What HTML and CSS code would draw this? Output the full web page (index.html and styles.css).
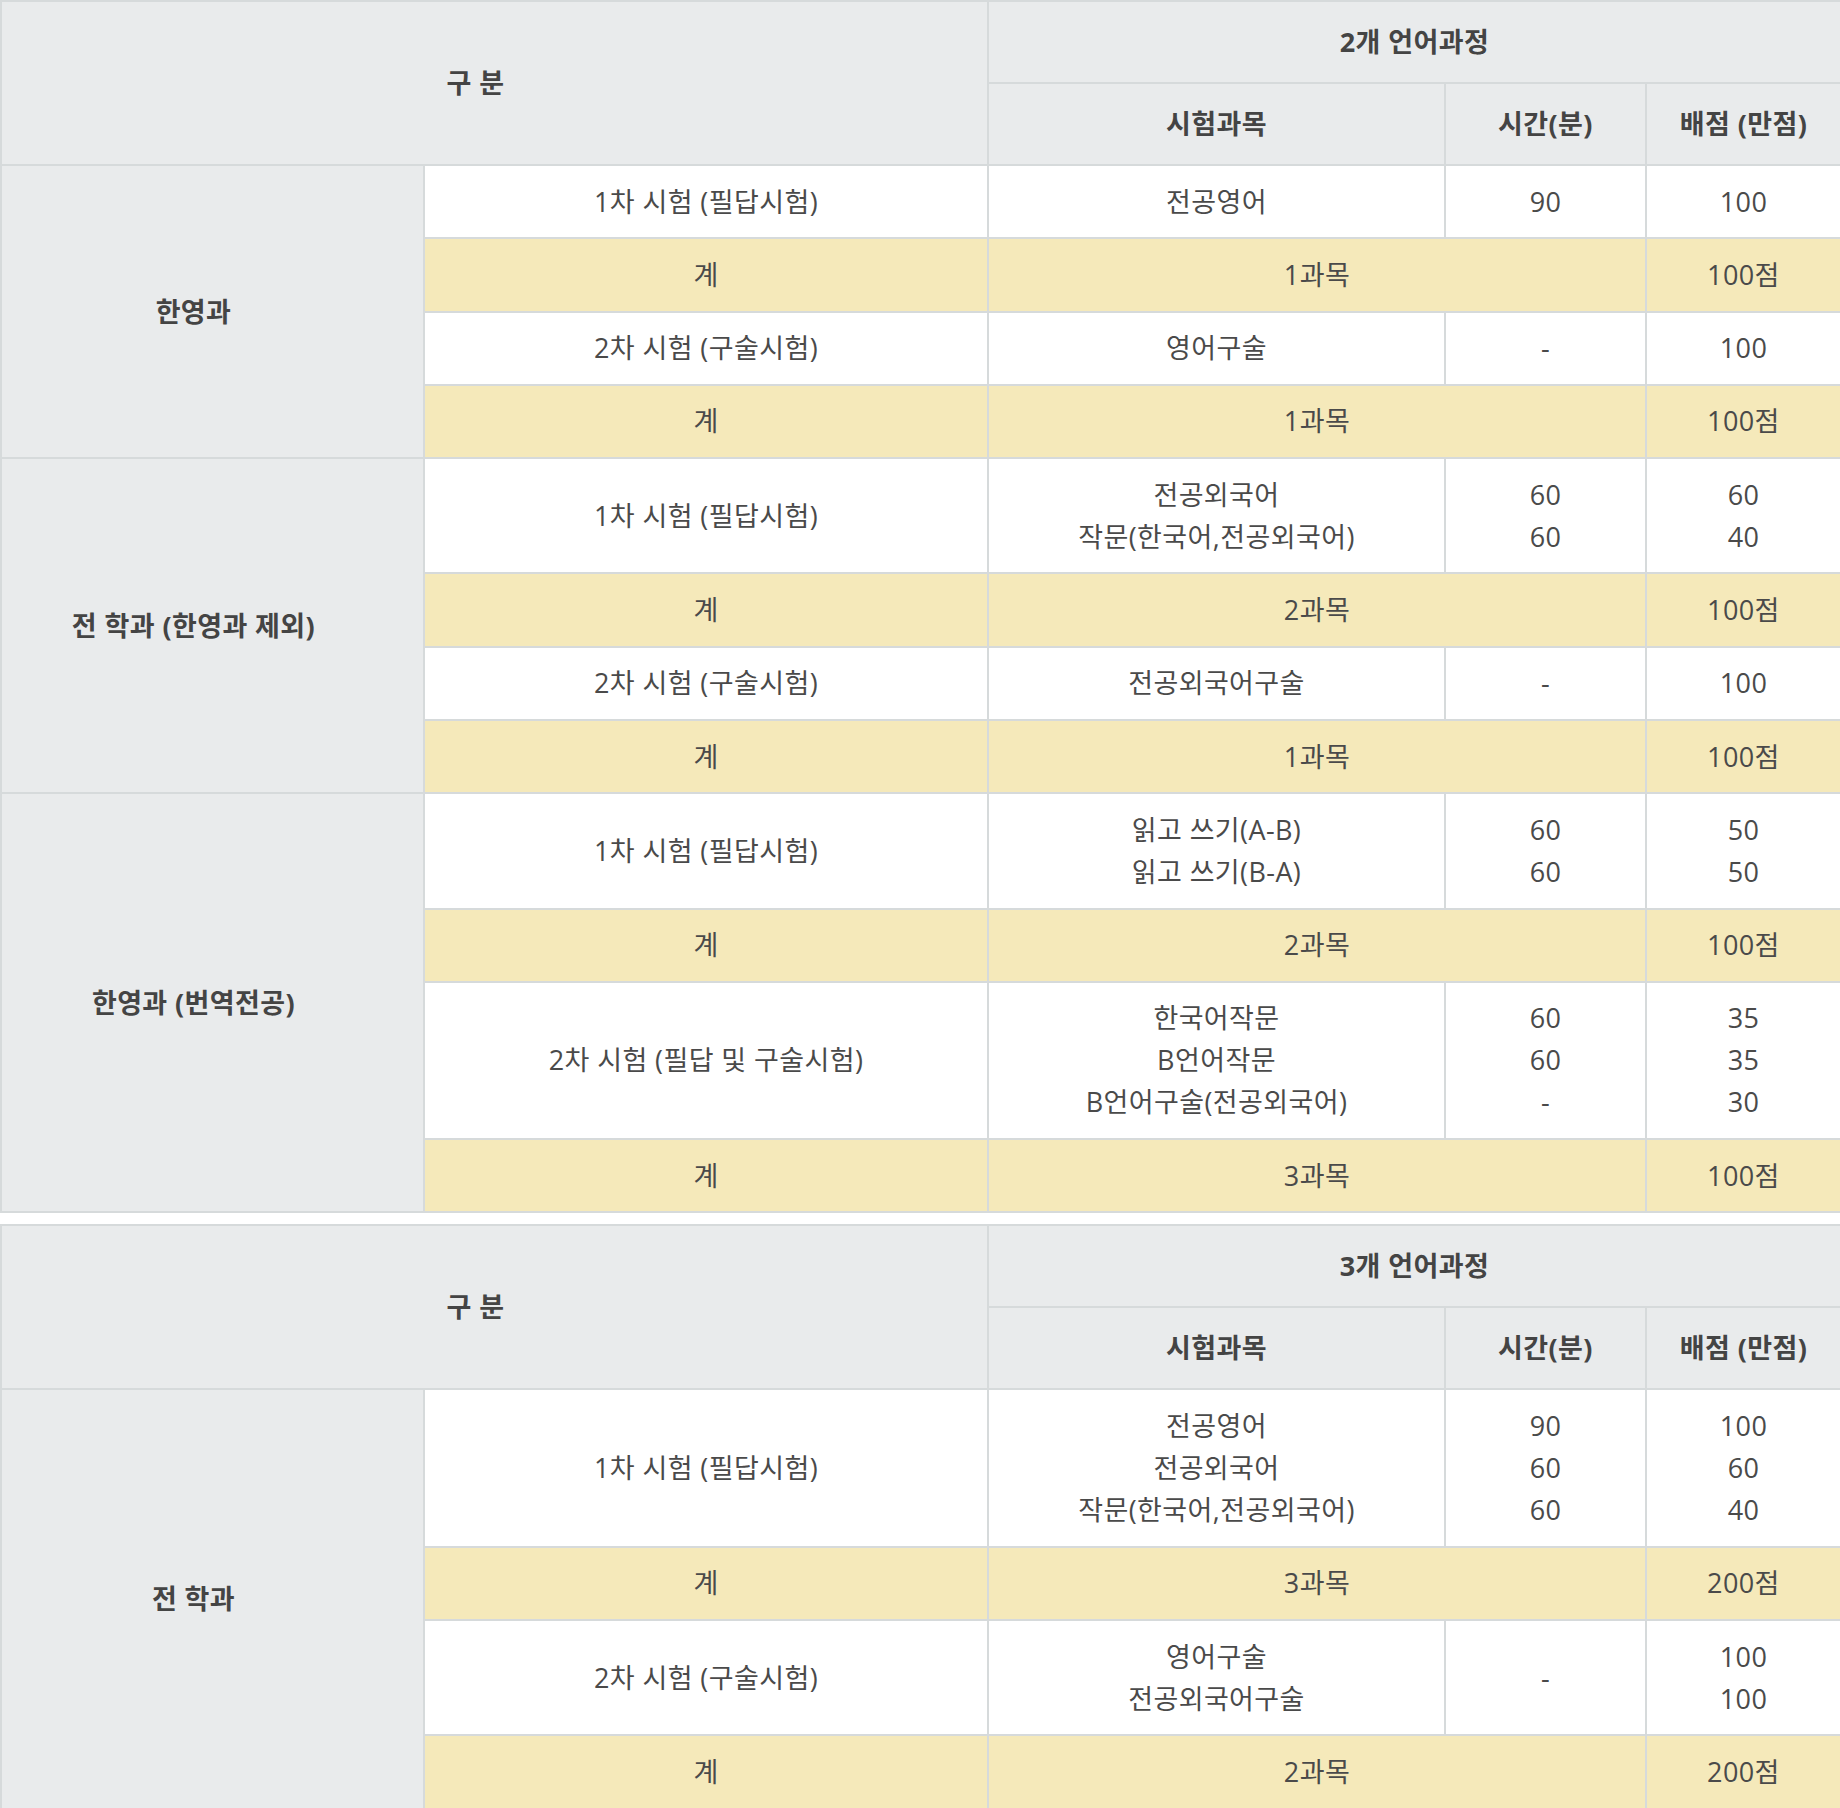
FILE: index.html
```html
<!DOCTYPE html>
<html lang="ko">
<head>
<meta charset="utf-8">
<title>시험과목</title>
<link rel="stylesheet" href="styles.css">
</head>
<body>
<div class="wrap">
<table class="exam">
  <colgroup>
    <col class="c1"><col class="c2"><col class="c3"><col class="c4"><col class="c5">
  </colgroup>
  <thead>
    <tr><th colspan="2" rowspan="2" class="corner">구 분</th><th colspan="3">2개 언어과정</th></tr>
    <tr><th>시험과목</th><th>시간(분)</th><th>배점 (만점)</th></tr>
  </thead>
  <tbody>
    <tr><th rowspan="4" class="dept">한영과</th><td>1차 시험 (필답시험)</td><td>전공영어</td><td>90</td><td>100</td></tr>
    <tr class="sum"><td>계</td><td colspan="2">1과목</td><td>100점</td></tr>
    <tr><td>2차 시험 (구술시험)</td><td>영어구술</td><td>-</td><td>100</td></tr>
    <tr class="sum"><td>계</td><td colspan="2">1과목</td><td>100점</td></tr>

    <tr><th rowspan="4" class="dept">전 학과 (한영과 제외)</th><td>1차 시험 (필답시험)</td><td>전공외국어<br>작문(한국어,전공외국어)</td><td>60<br>60</td><td>60<br>40</td></tr>
    <tr class="sum"><td>계</td><td colspan="2">2과목</td><td>100점</td></tr>
    <tr><td>2차 시험 (구술시험)</td><td>전공외국어구술</td><td>-</td><td>100</td></tr>
    <tr class="sum"><td>계</td><td colspan="2">1과목</td><td>100점</td></tr>

    <tr><th rowspan="4" class="dept">한영과 (번역전공)</th><td>1차 시험 (필답시험)</td><td>읽고 쓰기(A-B)<br>읽고 쓰기(B-A)</td><td>60<br>60</td><td>50<br>50</td></tr>
    <tr class="sum"><td>계</td><td colspan="2">2과목</td><td>100점</td></tr>
    <tr><td>2차 시험 (필답 및 구술시험)</td><td>한국어작문<br>B언어작문<br>B언어구술(전공외국어)</td><td>60<br>60<br>-</td><td>35<br>35<br>30</td></tr>
    <tr class="sum"><td>계</td><td colspan="2">3과목</td><td>100점</td></tr>
  </tbody>
</table>

<table class="exam">
  <colgroup>
    <col class="c1"><col class="c2"><col class="c3"><col class="c4"><col class="c5">
  </colgroup>
  <thead>
    <tr><th colspan="2" rowspan="2" class="corner">구 분</th><th colspan="3">3개 언어과정</th></tr>
    <tr><th>시험과목</th><th>시간(분)</th><th>배점 (만점)</th></tr>
  </thead>
  <tbody>
    <tr><th rowspan="4" class="dept">전 학과</th><td>1차 시험 (필답시험)</td><td>전공영어<br>전공외국어<br>작문(한국어,전공외국어)</td><td>90<br>60<br>60</td><td>100<br>60<br>40</td></tr>
    <tr class="sum"><td>계</td><td colspan="2">3과목</td><td>200점</td></tr>
    <tr><td>2차 시험 (구술시험)</td><td>영어구술<br>전공외국어구술</td><td>-</td><td>100<br>100</td></tr>
    <tr class="sum"><td>계</td><td colspan="2">2과목</td><td>200점</td></tr>
  </tbody>
</table>
</div>
</body>
</html>
```

FILE: styles.css
```css
html, body {
  margin: 0;
  padding: 0;
  background: #ffffff;
}

.wrap {
  display: flex;
  flex-direction: column;
  gap: 11px;
  width: 1840px;
}

.exam {
  width: 1840px;
  border-collapse: collapse;
  table-layout: fixed;
  font-family: "Open Sans", "Noto Sans CJK KR", sans-serif;
  font-size: 27px;
  letter-spacing: 0.4px;
  line-height: 42px;
  color: #4a4a4a;
}

.c1 { width: 423px; }
.c2 { width: 564px; }
.c3 { width: 457px; }
.c4 { width: 201px; }
.c5 { width: 195px; }

.exam th,
.exam td {
  border: 2px solid #d6dadb;
  text-align: center;
  vertical-align: middle;
  padding: 14.65px 6px;
  font-weight: 400;
  background: #ffffff;
}

.exam thead th {
  background: #e9ebec;
  font-weight: 700;
  color: #444444;
  padding: 19px 6px;
}

.exam th.dept {
  background: #e9ebec;
  font-weight: 700;
  color: #444444;
  padding-left: 4px;
  padding-right: 42px;
}

.exam thead th.corner {
  padding-left: 4px;
  padding-right: 42px;
}

.exam tr.sum td {
  background: #f5e9ba;
}
```
